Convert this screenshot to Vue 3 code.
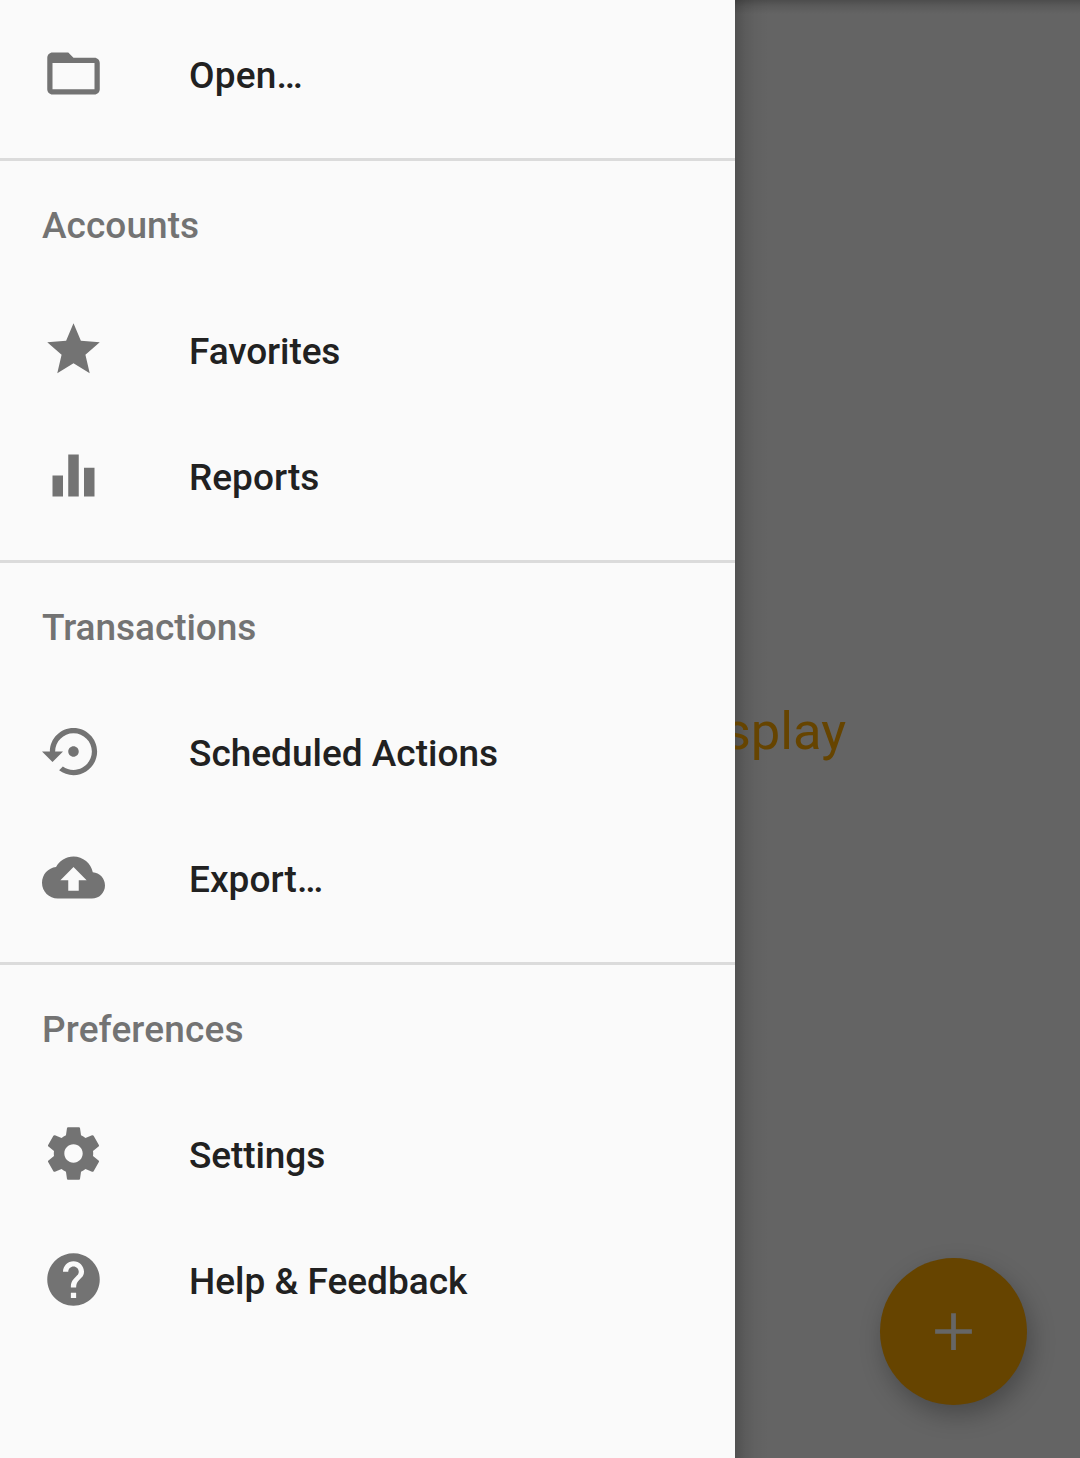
<script setup>
const groups = [
  { title: '', items: [
    { label: 'Open…', tracking: 0.2, d: 'M20 6h-8l-2-2H4c-1.1 0-1.99.9-1.99 2L2 18c0 1.1.9 2 2 2h16c1.1 0 2-.9 2-2V8c0-1.1-.9-2-2-2zm0 12H4V8h16v10z' },
  ] },
  { title: 'Accounts', tracking: 0.06, items: [
    { label: 'Favorites', tracking: -0.1, d: 'M12 17.27L18.18 21l-1.64-7.03L22 9.24l-7.19-.61L12 2 9.19 8.63 2 9.24l5.46 4.73L5.82 21z' },
    { label: 'Reports', tracking: 0, d: 'M10 20h4V4h-4v16zm-6 0h4v-8H4v8zM16 9v11h4V9h-4z' },
  ] },
  { title: 'Transactions', tracking: -0.05, items: [
    { label: 'Scheduled Actions', tracking: 0, d: 'M14 12c0-1.1-.9-2-2-2s-2 .9-2 2 .9 2 2 2 2-.9 2-2zm-2-9c-4.97 0-9 4.03-9 9H0l4 4 4-4H5c0-3.87 3.13-7 7-7s7 3.13 7 7-3.13 7-7 7c-1.51 0-2.91-.49-4.06-1.3l-1.42 1.44C8.04 20.3 9.94 21 12 21c4.97 0 9-4.03 9-9s-4.03-9-9-9z' },
    { label: 'Export…', tracking: 0.05, d: 'M19.35 10.04C18.67 6.59 15.64 4 12 4 9.11 4 6.6 5.64 5.35 8.04 2.34 8.36 0 10.91 0 14c0 3.31 2.69 6 6 6h13c2.76 0 5-2.24 5-5 0-2.64-2.05-4.78-4.65-4.96zM14 13v4h-4v-4H7l5-5 5 5h-3z' },
  ] },
  { title: 'Preferences', tracking: 0.15, items: [
    { label: 'Settings', tracking: -0.1, d: 'M19.43 12.98c.04-.32.07-.64.07-.98s-.03-.66-.07-.98l2.11-1.65c.19-.15.24-.42.12-.64l-2-3.46c-.12-.22-.39-.3-.61-.22l-2.49 1c-.52-.4-1.08-.73-1.69-.98l-.38-2.65C14.46 2.18 14.25 2 14 2h-4c-.25 0-.46.18-.49.42l-.38 2.65c-.61.25-1.17.59-1.69.98l-2.49-1c-.23-.09-.49 0-.61.22l-2 3.46c-.13.22-.07.49.12.64l2.11 1.65c-.04.32-.07.65-.07.98s.03.66.07.98l-2.11 1.65c-.19.15-.24.42-.12.64l2 3.46c.12.22.39.3.61.22l2.49-1c.52.4 1.08.73 1.69.98l.38 2.65c.03.24.24.42.49.42h4c.25 0 .46-.18.49-.42l.38-2.65c.61-.25 1.17-.59 1.69-.98l2.49 1c.23.09.49 0 .61-.22l2-3.46c.12-.22.07-.49-.12-.64l-2.11-1.65zM12 15.5c-1.93 0-3.5-1.57-3.5-3.5s1.57-3.5 3.5-3.5 3.5 1.57 3.5 3.5-1.57 3.5-3.5 3.5z' },
    { label: 'Help & Feedback', tracking: 0, d: 'M12 2C6.48 2 2 6.48 2 12s4.48 10 10 10 10-4.48 10-10S17.52 2 12 2zm1 17h-2v-2h2v2zm2.07-7.75l-.9.92C13.45 12.9 13 13.5 13 15h-2v-.5c0-1.1.45-2.1 1.17-2.83l1.24-1.26c.37-.36.59-.86.59-1.41 0-1.1-.9-2-2-2s-2 .9-2 2H8c0-2.21 1.79-4 4-4s4 1.79 4 4c0 .88-.36 1.68-.93 2.25z' },
  ] },
]
</script>

<template>
  <div class="screen">
    <nav class="drawer">
      <section v-for="(group, i) in groups" :key="i" class="group">
        <h2 v-if="group.title" :style="{ letterSpacing: group.tracking + 'px' }">{{ group.title }}</h2>
        <a v-for="item in group.items" :key="item.label" class="item">
          <svg viewBox="0 0 24 24"><path :d="item.d" /></svg>
          <span :style="{ letterSpacing: item.tracking + 'px' }">{{ item.label }}</span>
        </a>
      </section>
    </nav>
    <main class="content">
      <p class="empty">splay</p>
      <button class="fab" aria-label="Add">
        <svg viewBox="0 0 24 24"><path d="M19 12.9h-6.1V19h-1.8v-6.1H5v-1.8h6.1V5h1.8v6.1H19z" /></svg>
      </button>
    </main>
  </div>
</template>

<style>
body { margin: 0; }
</style>

<style scoped>
.screen {
  display: flex;
  width: 1080px;
  height: 1458px;
  overflow: hidden;
  font-family: Roboto, sans-serif;
}
.drawer {
  width: 735px;
  flex: none;
  background: #fafafa;
}
.group {
  box-sizing: border-box;
  height: 402px;
  border-top: 3px solid #dbdbdb;
}
.group:first-child {
  height: 158px;
  padding-top: 10px;
  border-top: 0;
}
h2 {
  margin: 0;
  padding-left: 42px;
  height: 125px;
  font-size: 37px;
  line-height: 129px;
  font-weight: 500;
  color: #737373;
}
.item {
  display: flex;
  align-items: center;
  height: 126px;
  padding-left: 42px;
  gap: 84px;
  font-size: 37px;
  font-weight: 500;
  color: #212121;
}
.item span {
  padding-top: 4px;
}
.item svg {
  width: 63px;
  height: 63px;
  fill: #737373;
}
.content {
  position: relative;
  flex: 1;
  overflow: hidden;
  background:
    linear-gradient(to bottom, rgba(0, 0, 0, 0.23), rgba(0, 0, 0, 0.1) 6px, transparent 14px),
    linear-gradient(to right, rgba(0, 0, 0, 0.2), rgba(0, 0, 0, 0.09) 10px, rgba(0, 0, 0, 0.03) 20px, transparent 34px),
    #646464;
}
.empty {
  position: absolute;
  right: 234px;
  top: 700px;
  margin: 0;
  font-size: 52.5px;
  line-height: 62px;
  white-space: nowrap;
  color: #664400;
}
.fab {
  position: absolute;
  left: 145px;
  top: 1258px;
  display: flex;
  align-items: center;
  justify-content: center;
  width: 147px;
  height: 147px;
  padding: 0;
  border: 0;
  border-radius: 50%;
  background: #664400;
  box-shadow: 4px 10px 24px rgba(0, 0, 0, 0.27);
}
.fab svg {
  width: 63px;
  height: 63px;
  fill: #666;
}
</style>
